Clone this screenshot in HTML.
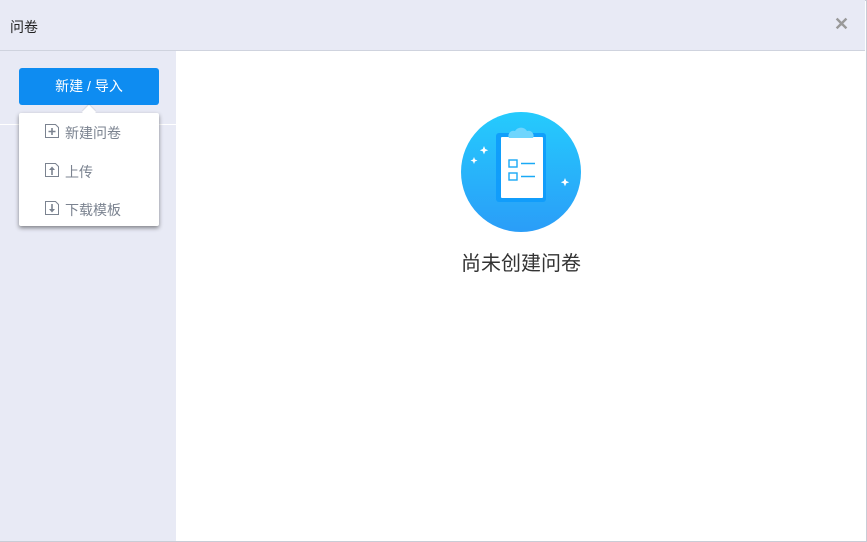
<!DOCTYPE html>
<html><head><style>
*{margin:0;padding:0;box-sizing:border-box}
body{width:867px;height:542px;overflow:hidden;font-family:"Liberation Sans","Noto Sans CJK SC",sans-serif;background:#fff;position:relative}
.win{position:absolute;left:0;top:0;width:867px;height:542px;border:1px solid #c9ccd6}
.hdr{position:absolute;left:0;top:0;width:865px;height:51px;background:#e8eaf5;border-bottom:1px solid #cfd3de}
.hdr .t{position:absolute;left:10px;top:17px;font-size:14px;color:#222}
.hdr .x{position:absolute;left:834px;top:14px;font-size:18px;color:#999;font-weight:bold}
.side{position:absolute;left:0;top:51px;width:176px;height:490px;background:#e8eaf5}
.side .ln{position:absolute;left:0;top:73px;width:176px;height:1px;background:#fff}
.btn{position:absolute;left:19px;top:68px;width:140px;height:37px;background:#0e8cf1;border-radius:3px;color:#fff;font-size:14px;text-align:center;line-height:37px}
.dd{position:absolute;left:19px;top:113px;width:140px;height:113px;background:#fff;box-shadow:0 2px 4px rgba(0,0,0,.45);border-radius:2px}
.arr{position:absolute;left:84px;top:107px;width:10px;height:10px;background:#fff;transform:rotate(45deg);box-shadow:-1px -1px 1px rgba(0,0,0,.08)}
.it{position:absolute;left:44px;font-size:14px;color:#7b8390}
.it svg{position:absolute;left:0;top:0}
.it span{position:absolute;left:21px;top:0;white-space:nowrap}
.empty{position:absolute;left:421px;top:247px;width:200px;text-align:center;font-size:20px;color:#333}
</style></head><body>
<div class="win"></div>
<div class="hdr"><div class="t">问卷</div><div class="x">✕</div></div>
<div class="side"><div class="ln"></div></div>
<div class="btn">新建 / 导入</div>
<div class="dd"></div><div class="arr"></div>
<div class="it" style="top:123px"><svg width="16" height="16"><path d="M1.5 1.5h10l3 3v10h-13z" fill="none" stroke="#7b8390"/><path d="M8 5v7M4.5 8.5h7" stroke="#7b8390" stroke-width="1.6"/></svg><span>新建问卷</span></div>
<div class="it" style="top:162px"><svg width="16" height="16"><path d="M1.5 1.5h10l3 3v10h-13z" fill="none" stroke="#7b8390"/><path d="M8 6v7" stroke="#7b8390" stroke-width="1.6"/><path d="M5 8l3-3.5 3 3.5z" fill="#7b8390"/></svg><span>上传</span></div>
<div class="it" style="top:200px"><svg width="16" height="16"><path d="M1.5 1.5h10l3 3v10h-13z" fill="none" stroke="#7b8390"/><path d="M8 4v6" stroke="#7b8390" stroke-width="1.6"/><path d="M5 9l3 3.5 3-3.5z" fill="#7b8390"/></svg><span>下载模板</span></div>
<svg style="position:absolute;left:461px;top:112px" width="120" height="120">
<defs><linearGradient id="g" x1="0" y1="0" x2="0" y2="1"><stop offset="0" stop-color="#25cbfd"/><stop offset="1" stop-color="#2a9df8"/></linearGradient></defs>
<circle cx="60" cy="60" r="60" fill="url(#g)"/>
<rect x="35" y="21" width="50" height="69" rx="3" fill="#0e9bfb" opacity=".9"/>
<rect x="40" y="25" width="42" height="61" rx="1" fill="#fff"/>
<path d="M48 26a5 5 0 0 1 6-7a7 7 0 0 1 12 0a5 5 0 0 1 6 7z" fill="#6fd5fd"/>
<rect x="48" y="48" width="8" height="7" fill="none" stroke="#1aa9f6" stroke-width="1.4"/>
<rect x="48" y="61" width="8" height="7" fill="none" stroke="#1aa9f6" stroke-width="1.4"/>
<path d="M60 51.5h14M60 64.5h14" stroke="#1aa9f6" stroke-width="1.4"/>
<path d="M23 34l1.2 3 3 1.2-3 1.2-1.2 3-1.2-3-3-1.2 3-1.2z" fill="#fff"/>
<path d="M13 45l1 2.5 2.5 1-2.5 1-1 2.5-1-2.5-2.5-1 2.5-1z" fill="#fff"/>
<path d="M104 66l1.2 3 3 1.2-3 1.2-1.2 3-1.2-3-3-1.2 3-1.2z" fill="#fff"/>
</svg>
<div class="empty">尚未创建问卷</div>
</body></html>
